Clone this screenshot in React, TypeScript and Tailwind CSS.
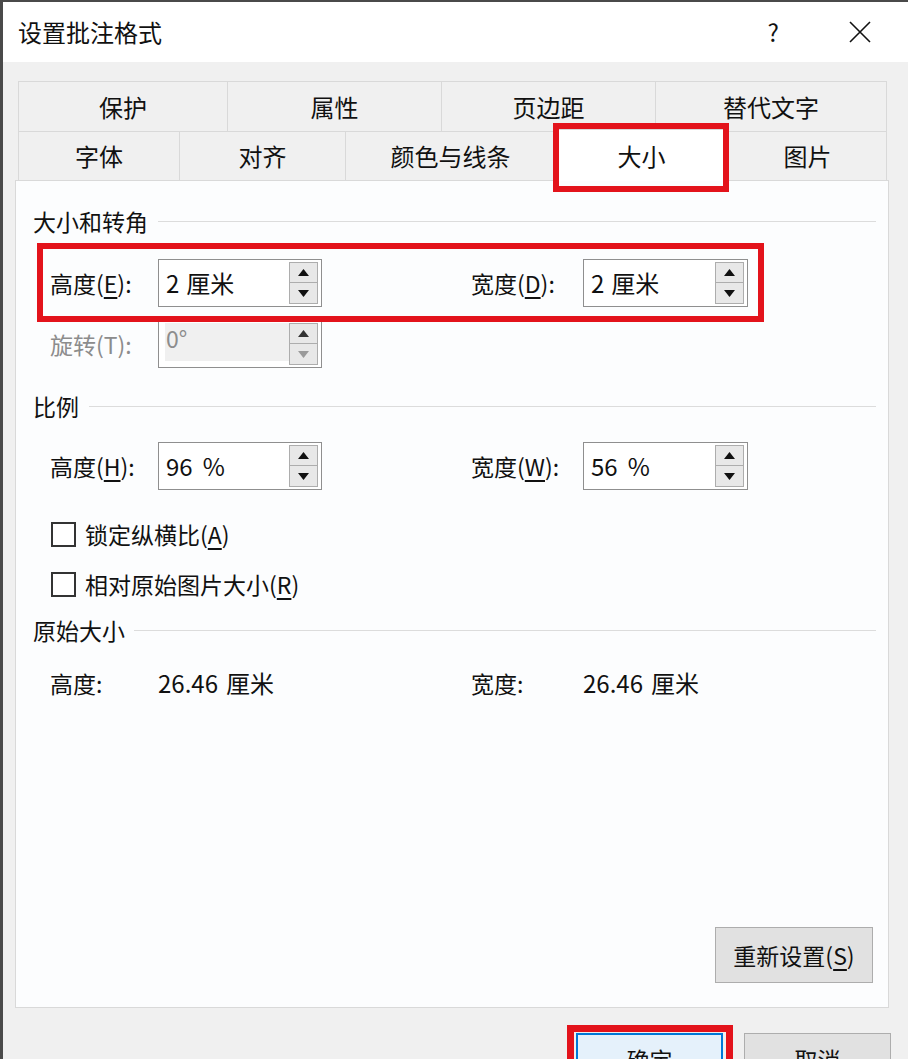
import React from "react";

function Spin({ disabled = false }: { disabled?: boolean }) {
  return (
    <div className="flex flex-col gap-0 mr-[3px]">
      <div className="w-[29px] h-[21px] border border-[#adadad] bg-[#e8e8e8] flex items-center justify-center">
        <svg width="11" height="7" viewBox="0 0 11 7">
          <path d="M0 7 L5.5 0 L11 7 Z" fill={disabled ? "#333" : "#111"} />
        </svg>
      </div>
      <div className="w-[29px] h-[21px] border border-t-0 border-[#adadad] bg-[#e8e8e8] flex items-center justify-center">
        <svg width="11" height="7" viewBox="0 0 11 7">
          <path d="M0 0 L11 0 L5.5 7 Z" fill={disabled ? "#9a9a9a" : "#111"} />
        </svg>
      </div>
    </div>
  );
}

function Field({ num, unit, w, disabled = false }: { num: string; unit?: string; w: string; disabled?: boolean }) {
  return (
    <div className={`${w} h-[48px] border border-[#8f8f8f] bg-white flex items-center justify-between`}>
      {disabled ? (
        <div className="ml-[6px] mt-[2px] self-stretch mb-[6px] flex-1 bg-[#f0f0f0] flex items-start pt-[4px] pl-[1px] text-[#8c8c8c]">
          {num}
        </div>
      ) : (
        <span className="pl-[7px] text-[24px]">
          {num}
          {unit && <span className={unit === "%" ? "ml-[10px]" : "ml-[7px]"}>{unit}</span>}
        </span>
      )}
      <Spin disabled={disabled} />
    </div>
  );
}

function Heading({ text, lineStart }: { text: string; lineStart: string }) {
  return (
    <div className="flex items-center h-[34px] pl-[17px] pr-[12px]">
      <span className={lineStart}>{text}</span>
      <div className="flex-1 h-px bg-[#dcdcdc]" />
    </div>
  );
}

function Label({ main, k, w }: { main: string; k?: string; w: string }) {
  return (
    <span className={w}>
      {main}
      {k && (
        <>
          (<span className="underline underline-offset-4">{k}</span>)
        </>
      )}
      :
    </span>
  );
}

function Check({ main, k }: { main: string; k: string }) {
  return (
    <div className="flex items-center h-[34px] pl-[35px]">
      <div className="w-[25px] h-[25px] border-2 border-[#333] bg-white" />
      <span className="ml-[9px]">
        {main}(<span className="underline underline-offset-4">{k}</span>)
      </span>
    </div>
  );
}

const row1 = [
  { t: "保护", w: "w-[209px]" },
  { t: "属性", w: "w-[214px]" },
  { t: "页边距", w: "w-[214px]" },
  { t: "替代文字", w: "w-[232px]" },
];

const row2 = [
  { t: "字体", w: "w-[161px]" },
  { t: "对齐", w: "w-[166px]" },
  { t: "颜色与线条", w: "w-[210px]" },
  { t: "大小", w: "w-[173px]", active: true },
  { t: "图片", w: "w-[159px]" },
];

export default function App() {
  return (
    <div className="relative w-[908px] h-[1059px] overflow-hidden bg-[#f0f0f0] border-l-[3px] border-t-2 border-[#4a4a4a] flex flex-col font-['Noto_Sans_CJK_SC',sans-serif] text-[23px] text-[#111] leading-none">
      {/* title bar */}
      <div className="h-[60px] bg-white flex items-center pl-[15px] shrink-0">
        <span className="text-[24px]">设置批注格式</span>
        <span className="ml-auto mr-[70px] text-[24px]">?</span>
        <svg width="22" height="22" viewBox="0 0 22 22" className="mr-[37px]">
          <path d="M1 1 L21 21 M21 1 L1 21" stroke="#111" strokeWidth="1.6" />
        </svg>
      </div>

      {/* tabs */}
      <div className="mt-[19px] pl-[15px] shrink-0 text-[24px]">
        <div className="flex h-[50px]">
          {row1.map((t, i) => (
            <div
              key={t.t}
              className={`${t.w} flex items-center justify-center border-t border-l border-[#d9d9d9] ${
                i === row1.length - 1 ? "border-r" : ""
              }`}
            >
              {t.t}
            </div>
          ))}
        </div>
        <div className="flex h-[49px]">
          {row2.map((t, i) => (
            <div
              key={t.t}
              className={`${t.w} flex items-center justify-center border-t border-l border-[#d9d9d9] ${
                i === row2.length - 1 ? "border-r" : ""
              } ${t.active ? "relative z-10 bg-white -mt-[2px] h-[52px] border-r" : ""}`}
            >
              {t.t}
            </div>
          ))}
        </div>
      </div>

      {/* panel */}
      <div className="ml-[12px] w-[874px] h-[828px] shrink-0 bg-[#fcfdfe] border border-[#d9d9d9] flex flex-col">
        <div className="mt-[23px]">
          <Heading text="大小和转角" lineStart="mr-[10px]" />
        </div>

        <div className="mt-[21px] flex items-center pl-[34px]">
          <Label main="高度" k="E" w="w-[108px]" />
          <Field num="2" unit="厘米" w="w-[164px]" />
          <div className="w-[149px]" />
          <Label main="宽度" k="D" w="w-[112px]" />
          <Field num="2" unit="厘米" w="w-[165px]" />
        </div>

        <div className="mt-[13px] flex items-center pl-[34px]">
          <span className="w-[108px] text-[#8c8c8c]">旋转(T):</span>
          <Field num="0°" w="w-[164px]" disabled />
        </div>

        <div className="mt-[21px]">
          <Heading text="比例" lineStart="mr-[10px]" />
        </div>

        <div className="mt-[19px] flex items-center pl-[34px]">
          <Label main="高度" k="H" w="w-[108px]" />
          <Field num="96" unit="%" w="w-[164px]" />
          <div className="w-[149px]" />
          <Label main="宽度" k="W" w="w-[112px]" />
          <Field num="56" unit="%" w="w-[165px]" />
        </div>

        <div className="mt-[27px]">
          <Check main="锁定纵横比" k="A" />
        </div>
        <div className="mt-[16px]">
          <Check main="相对原始图片大小" k="R" />
        </div>

        <div className="mt-[12px]">
          <Heading text="原始大小" lineStart="mr-[9px]" />
        </div>

        <div className="mt-[19px] h-[34px] flex items-center pl-[34px]">
          <span className="w-[108px]">高度:</span>
          <span className="w-[313px] text-[24px]">
            26.46<span className="ml-[8px]">厘米</span>
          </span>
          <span className="w-[112px]">宽度:</span>
          <span className="text-[24px]">
            26.46<span className="ml-[8px]">厘米</span>
          </span>
        </div>

        <div className="mt-auto mb-[24px] flex justify-end pr-[15px]">
          <button className="w-[158px] h-[56px] border border-[#adadad] bg-[#e1e1e1] flex items-center justify-center text-[23px]">
            重新设置(<span className="underline underline-offset-4">S</span>)
          </button>
        </div>
      </div>

      {/* bottom buttons */}
      <div className="mt-[25px] flex shrink-0 pl-[573px]">
        <button className="w-[147px] h-[52px] border-2 border-[#0078d7] bg-[#e5f1fb] flex items-center justify-center text-[23px]">
          确定
        </button>
        <button className="ml-[21px] w-[147px] h-[52px] border border-[#adadad] bg-[#e1e1e1] flex items-center justify-center text-[23px]">
          取消
        </button>
      </div>

      {/* red annotation boxes */}
      <div className="absolute left-[550px] top-[121px] w-[176px] h-[69px] border-[6px] border-[#e3131b] z-20 pointer-events-none" />
      <div className="absolute left-[34px] top-[241px] w-[727px] h-[79px] border-[6px] border-[#e3131b] z-20 pointer-events-none" />
      <div className="absolute left-[564px] top-[1023px] w-[166px] h-[60px] border-[7px] border-[#e3131b] z-20 pointer-events-none" />
    </div>
  );
}
